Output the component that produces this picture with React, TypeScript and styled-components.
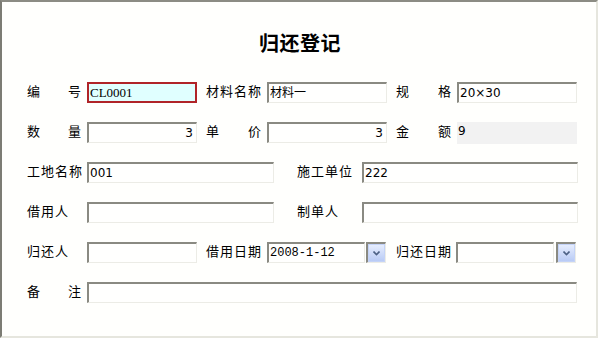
import React from "react";
import styled, { createGlobalStyle } from "styled-components";

const Global = createGlobalStyle`
  html, body { margin: 0; padding: 0; background: #fff; }
  body { width: 600px; height: 340px; overflow: hidden; }
`;

const Frame = styled.div`
  box-sizing: border-box;
  width: 598px;
  height: 338px;
  border-top: 2px solid #8c8c84;
  border-left: 2px solid #7c7c74;
  border-right: 2px solid #e6e6de;
  border-bottom: 2px solid #e6e6de;
  background: #fffffd;
  font-family: "Noto Sans CJK SC", "DejaVu Sans", sans-serif;
  font-size: 13px;
  color: #000;
  padding: 28px 0 0 25px;
`;

const Title = styled.h1`
  margin: 0 0 0 -25px;
  width: 596px;
  text-align: center;
  font-size: 20px;
  font-weight: bold;
  line-height: 26px;
  height: 26px;
  letter-spacing: 0.5px;
`;

const Rows = styled.div`
  display: flex;
  flex-direction: column;
  gap: 19px;
  margin-top: 26px;
`;

const Row = styled.div`
  display: flex;
  align-items: flex-start;
  height: 21px;
`;

const Label = styled.span<{ $w: number; $ml?: number; $spread?: boolean }>`
  box-sizing: border-box;
  width: ${(p) => p.$w}px;
  margin-left: ${(p) => p.$ml ?? 0}px;
  display: flex;
  justify-content: ${(p) => (p.$spread ? "space-between" : "flex-start")};
  padding-right: ${(p) => (p.$spread ? 6 : 0)}px;
  line-height: 17px;
  letter-spacing: ${(p) => (p.$spread ? 0 : 1)}px;
  white-space: nowrap;
  flex-shrink: 0;
`;

const Field = styled.div<{ $w: number; $align?: string; $font?: string; $hl?: boolean; $fs?: number }>`
  box-sizing: border-box;
  width: ${(p) => p.$w}px;
  height: 21px;
  flex-shrink: 0;
  border-style: solid;
  border-width: 2px 1px 1px 2px;
  border-color: #8a8a82 #ecece6 #ecece6 #8a8a82;
  background: #fffffe;
  font-family: ${(p) => p.$font ?? `"DejaVu Sans", "Noto Sans CJK SC", sans-serif`};
  font-size: ${(p) => p.$fs ?? 12}px;
  line-height: 18px;
  padding: 0 3px 0 1px;
  text-align: ${(p) => p.$align ?? "left"};
  white-space: nowrap;
  overflow: hidden;
  ${(p) =>
    p.$hl &&
    `
    border: 2px solid #b02428;
    background: #e0ffff;
  `}
`;

const ReadOnly = styled.div<{ $w: number }>`
  box-sizing: border-box;
  width: ${(p) => p.$w}px;
  height: 22px;
  background: #f2f2f2;
  font-family: "DejaVu Sans", sans-serif;
  font-size: 12px;
  line-height: 18px;
  padding-left: 1px;
`;

const DropBtn = styled.div<{ $ml: number }>`
  box-sizing: border-box;
  margin-left: ${(p) => p.$ml}px;
  width: 20px;
  height: 21px;
  border-style: solid;
  border-width: 2px 1px 1px 2px;
  border-color: #8a8a82 #ecece6 #ecece6 #8a8a82;
  background: #fff;
  flex-shrink: 0;
  display: flex;
`;

const DropFace = styled.div`
  flex: 1;
  border: 1px solid #c4d3f7;
  background: linear-gradient(#e6edfd, #b9cbf5);
  display: flex;
  align-items: center;
  justify-content: center;
`;

const Chevron = () => (
  <svg width="7" height="5" viewBox="0 0 7 5">
    <path d="M0.5 0.5 L3.5 3.5 L6.5 0.5" stroke="#4d6185" strokeWidth="1.6" fill="none" />
  </svg>
);

const Combo = ({ w, ml, value }: { w: number; ml: number; value?: string }) => (
  <>
    <Field $w={w} $font={`"Liberation Mono", "DejaVu Sans Mono", monospace`}>{value}</Field>
    <DropBtn $ml={ml}>
      <DropFace>
        <Chevron />
      </DropFace>
    </DropBtn>
  </>
);

export default function App() {
  return (
    <>
      <Global />
      <Frame>
        <Title>归还登记</Title>
        <Rows>
          <Row>
            <Label $w={60} $spread>
              <span>编</span>
              <span>号</span>
            </Label>
            <Field $w={110} $hl $fs={13} $font={`"Liberation Serif", serif`}>
              CL0001
            </Field>
            <Label $w={61} $ml={9}>材料名称</Label>
            <Field $w={120}>材料一</Field>
            <Label $w={61} $ml={9} $spread>
              <span>规</span>
              <span>格</span>
            </Label>
            <Field $w={120}>20×30</Field>
          </Row>
          <Row>
            <Label $w={60} $spread>
              <span>数</span>
              <span>量</span>
            </Label>
            <Field $w={110} $align="right">3</Field>
            <Label $w={61} $ml={9} $spread>
              <span>单</span>
              <span>价</span>
            </Label>
            <Field $w={120} $align="right">3</Field>
            <Label $w={61} $ml={9} $spread>
              <span>金</span>
              <span>额</span>
            </Label>
            <ReadOnly $w={120}>9</ReadOnly>
          </Row>
          <Row>
            <Label $w={60}>工地名称</Label>
            <Field $w={187}>001</Field>
            <Label $w={65} $ml={23}>施工单位</Label>
            <Field $w={216}>222</Field>
          </Row>
          <Row>
            <Label $w={60}>借用人</Label>
            <Field $w={187}></Field>
            <Label $w={65} $ml={23}>制单人</Label>
            <Field $w={216}></Field>
          </Row>
          <Row>
            <Label $w={60}>归还人</Label>
            <Field $w={110}></Field>
            <Label $w={61} $ml={9}>借用日期</Label>
            <Combo w={98} ml={1} value="2008-1-12" />
            <Label $w={60} $ml={10}>归还日期</Label>
            <Combo w={98} ml={2} />
          </Row>
          <Row>
            <Label $w={60} $spread>
              <span>备</span>
              <span>注</span>
            </Label>
            <Field $w={490}></Field>
          </Row>
        </Rows>
      </Frame>
    </>
  );
}
